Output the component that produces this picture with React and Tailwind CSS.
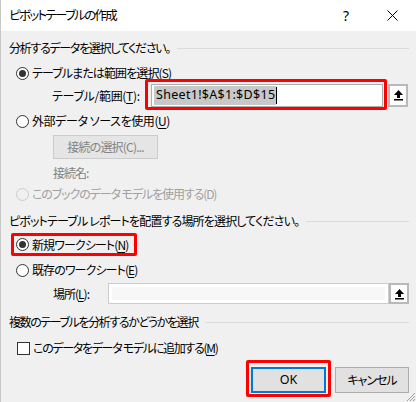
import React from 'react';

const font = "font-['Yu_Gothic_UI','Noto_Sans_CJK_JP',sans-serif] [font-feature-settings:'palt']";

const Radio = ({ checked, disabled }) => (
  <span
    className={`flex items-center justify-center shrink-0 w-[13px] h-[13px] rounded-full border ${
      disabled ? 'border-[#cccccc] bg-[#f0f0f0]' : 'border-[#333333] bg-white'
    }`}
  >
    {checked && <span className="w-[7px] h-[7px] rounded-full bg-[#333333]" />}
  </span>
);

const Key = ({ children }) => <span className="underline underline-offset-2">{children}</span>;

const UploadButton = ({ h }) => (
  <div className={`w-[20px] ${h} border-2 border-[#b9b9b9] bg-[#fdfdfd] flex items-center justify-center`}>
    <svg width="11" height="12" viewBox="0 0 11 12">
      <path d="M5.5 1 L10 6 L7 6 L7 9 L4 9 L4 6 L1 6 Z" fill="#000" />
      <rect x="1" y="10" width="9" height="1.5" fill="#000" />
    </svg>
  </div>
);

const Section = ({ children, mt, track }) => (
  <div className={`${mt} h-[16px] flex items-center gap-[7px]`}>
    <span className={`whitespace-nowrap ${track}`}>{children}</span>
    <div className="flex-1 h-px bg-[#dcdcdc]" />
  </div>
);

export default function App() {
  return (
    <div className={`w-[416px] h-[402px] bg-[#f0f0f0] border-l border-[#c8c8c8] text-[12px] leading-none text-black whitespace-nowrap relative overflow-hidden ${font}`}>
      {/* title bar */}
      <div className="h-[31px] bg-white flex items-center pl-[8px]">
        <span className="text-[12.5px] tracking-[-1.7px]">ピボットテーブルの作成</span>
        <span className="ml-auto mr-[38px] font-['Noto_Sans',sans-serif] text-[14px]">?</span>
        <svg width="11" height="11" viewBox="0 0 11 11" className="mr-[18px]">
          <path d="M0.5 0.5 L10.5 10.5 M10.5 0.5 L0.5 10.5" stroke="#000" strokeWidth="1" />
        </svg>
      </div>

      <div className="pl-[8px] pr-[7px] flex flex-col">
        <Section mt="mt-[9px]" track="tracking-[-1.3px]">分析するデータを選択してください。</Section>

        <div className="mt-[9px] h-[16px] flex items-center pl-[7px] gap-[3px]">
          <Radio checked />
          <span className="tracking-[-0.9px]">テーブルまたは範囲を選択(<Key>S</Key>)</span>
        </div>

        <div className="mt-[-2px] h-[31px] flex items-center">
          <span className="pl-[43px] w-[136px] pt-[2px] tracking-[-0.3px]">テーブル/範囲(<Key>T</Key>):</span>
          <div className="w-[242px] h-[31px] border-[3px] border-[#ff0000] rounded-[2px] pl-[3px] pr-[1px] pt-[2px]">
            <div className="h-[23px] border border-[#adadad] bg-white flex items-center pl-[2px]">
              <span className="bg-[#c8c8c8] h-[19px] flex items-center pl-[2px] pr-[1px] font-['Noto_Sans',sans-serif] text-[12.5px] tracking-[0.3px]">
                Sheet1!$A$1:$D$15
              </span>
              <span className="w-px h-[17px] bg-black" />
            </div>
          </div>
          <div className="ml-[1px] pt-[1px]">
            <UploadButton h="h-[23px]" />
          </div>
        </div>

        <div className="mt-[3px] h-[16px] flex items-center pl-[7px] gap-[3px]">
          <Radio />
          <span className="tracking-[-0.4px]">外部データ ソースを使用(<Key>U</Key>)</span>
        </div>

        <div className="mt-[6px] h-[24px] pl-[44px]">
          <div className="w-[105px] h-[24px] border border-[#cccccc] bg-[#e5e5e5] text-[#838383] flex items-center justify-center tracking-[-0.8px]">
            接続の選択(C)...
          </div>
        </div>

        <div className="mt-[6px] h-[16px] flex items-center pl-[44px] text-[#838383] tracking-[-1px]">接続名:</div>

        <div className="mt-[5px] h-[16px] flex items-center pl-[7px] gap-[3px] text-[#a0a0a0]">
          <Radio disabled />
          <span className="tracking-[-1.1px]">このブックのデータ モデルを使用する(D)</span>
        </div>

        <Section mt="mt-[11px]" track="tracking-[-0.85px]">ピボットテーブル レポートを配置する場所を選択してください。</Section>

        <div className="mt-[4px] h-[23px] flex">
          <div className="ml-[2px] w-[126px] h-[23px] border-[3px] border-[#ff0000] rounded-[2px] flex items-center pl-[2px] gap-[3px]">
            <Radio checked />
            <span className="tracking-[-0.9px]">新規ワークシート(<Key>N</Key>)</span>
          </div>
        </div>

        <div className="mt-[6px] h-[16px] flex items-center pl-[7px] gap-[3px]">
          <Radio />
          <span className="tracking-[-0.9px]">既存のワークシート(<Key>E</Key>)</span>
        </div>

        <div className="mt-[5px] h-[21px] flex items-center">
          <span className="pl-[44px] w-[99px] tracking-[-1px]">場所(<Key>L</Key>):</span>
          <div className="w-[281px] h-[21px] border border-[#cccccc] bg-white p-[3px]">
            <div className="w-full h-full bg-[#f7f7f7]" />
          </div>
          <UploadButton h="h-[21px]" />
        </div>

        <Section mt="mt-[10px]" track="tracking-[-1.4px]">複数のテーブルを分析するかどうかを選択</Section>

        <div className="mt-[10px] h-[16px] flex items-center pl-[8px] gap-[3px]">
          <span className="w-[13px] h-[13px] border border-[#333333] bg-white" />
          <span className="tracking-[-1.3px]">このデータをデータ モデルに追加する(<Key>M</Key>)</span>
        </div>

        <div className="mt-[4px] h-[37px] flex items-start justify-end">
          <div className="w-[85px] h-[37px] border-[3px] border-[#ff0000] rounded-[2px] pl-[2px] pt-[4px]">
            <div className="w-[75px] h-[26px] border-2 border-[#0078d7] bg-[#e1e1e1] flex items-center justify-center font-['Noto_Sans',sans-serif] text-[12.5px]">
              OK
            </div>
          </div>
          <div className="ml-[4px] mt-[7px] w-[74px] h-[26px] border border-[#adadad] bg-[#e1e1e1] flex items-center justify-center tracking-[-1px]">
            キャンセル
          </div>
        </div>
      </div>

      {/* resize grip */}
      <svg width="12" height="12" viewBox="0 0 12 12" className="absolute right-0 bottom-0">
        <path d="M11 3 L3 11 M11 6 L6 11 M11 9 L9 11" stroke="#a0a0a0" strokeWidth="1" />
      </svg>
    </div>
  );
}
